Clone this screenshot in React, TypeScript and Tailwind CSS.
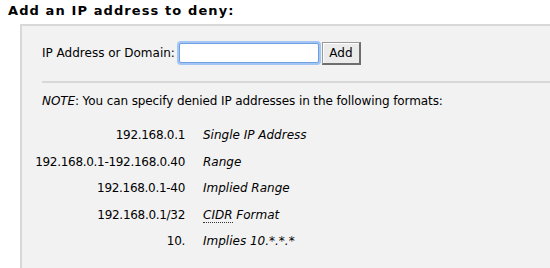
const formats = [
    { value: '192.168.0.1', label: 'Single IP Address' },
    { value: '192.168.0.1-192.168.0.40', label: 'Range' },
    { value: '192.168.0.1-40', label: 'Implied Range' },
    { value: '192.168.0.1/32', label: 'CIDR Format', abbr: 'CIDR' },
    { value: '10.', label: 'Implies 10.*.*.*' },
];

function App() {
    return (
        <div className="w-[550px] h-[268px] overflow-hidden bg-white text-black font-['DejaVu_Sans',sans-serif]">
            <h2 className="pl-2 pt-[3px] text-[13px] leading-4 font-bold tracking-[1.1px]">Add an IP address to deny:</h2>

            <div className="ml-5 mt-[5px] w-[560px] border-t-2 border-l-2 border-[#d8d8d8] bg-[#f2f2f2] pb-8">
                <div className="pl-5 pt-[14px] pb-[16px] flex items-center text-[12px]">
                    <label htmlFor="ip" className="mr-[4px]">IP Address or Domain:</label>
                    <input
                        id="ip"
                        type="text"
                        className="w-[140px] h-[20px] bg-white border border-[#6f9fe3] rounded-[2px] shadow-[0_0_0_2px_#a4c6f4] outline-none"
                    />
                    <button
                        type="button"
                        className="ml-[3px] mt-[2px] w-[39px] h-[23px] text-[12px] bg-[#ebebeb] border border-[#9a9a9a] border-r-2 border-b-2 border-r-[#6e6e6e] border-b-[#6e6e6e] shadow-[inset_1px_1px_0_#fff]"
                    >
                        Add
                    </button>
                </div>

                <div className="ml-5 border-t-2 border-[#d8d8d8]" />

                <p className="pl-5 pt-[10px] text-[12px] leading-4 tracking-[-0.1px]">
                    <em>NOTE</em>: You can specify denied IP addresses in the following formats:
                </p>

                <div className="mt-[13px] text-[12px] leading-4">
                    {formats.map((f) => (
                        <div key={f.value} className="flex h-[26.5px] items-center">
                            <span className="w-[163px] text-right tracking-[-0.3px]">{f.value}</span>
                            <span className="ml-[18px] italic">
                                {f.abbr ? (
                                    <>
                                        <abbr className="no-underline border-b border-dotted border-[#333]">{f.abbr}</abbr>
                                        {f.label.slice(f.abbr.length)}
                                    </>
                                ) : (
                                    f.label
                                )}
                            </span>
                        </div>
                    ))}
                </div>
            </div>
        </div>
    );
}

export default App;
